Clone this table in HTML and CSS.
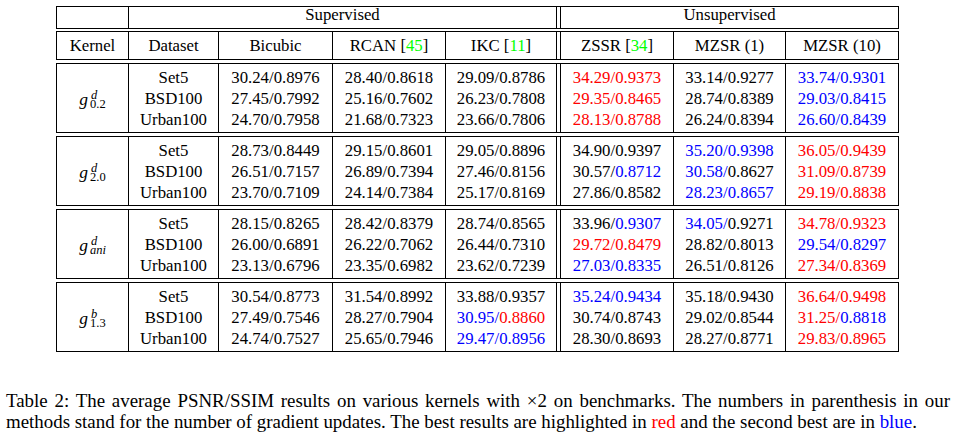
FILE: index.html
```html
<!DOCTYPE html>
<html>
<head>
<meta charset="utf-8">
<link rel="stylesheet" href="styles.css">
</head>
<body>
<div class="page">
  <div class="table">
    <div class="sec head1">
      <div class="cell"></div>
      <div class="cell span-sup">Supervised</div>
      <div class="cell sep"></div>
      <div class="cell span-unsup">Unsupervised</div>
    </div>
    <div class="sec head2">
      <div class="cell">Kernel</div>
      <div class="cell">Dataset</div>
      <div class="cell">Bicubic</div>
      <div class="cell">RCAN [<span class="cite">45</span>]</div>
      <div class="cell">IKC [<span class="cite">11</span>]</div>
      <div class="cell sep"></div>
      <div class="cell">ZSSR [<span class="cite">34</span>]</div>
      <div class="cell">MZSR (1)</div>
      <div class="cell">MZSR (10)</div>
    </div>

    <div class="sec group">
      <div class="cell kernel"><span class="math"><i class="g">g</i><span class="scripts"><i class="sup">d</i><span class="sub">0.2</span></span></span></div>
      <div class="cell col"><div>Set5</div><div>BSD100</div><div>Urban100</div></div>
      <div class="cell col"><div>30.24/0.8976</div><div>27.45/0.7992</div><div>24.70/0.7958</div></div>
      <div class="cell col"><div>28.40/0.8618</div><div>25.16/0.7602</div><div>21.68/0.7323</div></div>
      <div class="cell col"><div>29.09/0.8786</div><div>26.23/0.7808</div><div>23.66/0.7806</div></div>
      <div class="cell sep"></div>
      <div class="cell col"><div class="r">34.29/0.9373</div><div class="r">29.35/0.8465</div><div class="r">28.13/0.8788</div></div>
      <div class="cell col"><div>33.14/0.9277</div><div>28.74/0.8389</div><div>26.24/0.8394</div></div>
      <div class="cell col"><div class="b">33.74/0.9301</div><div class="b">29.03/0.8415</div><div class="b">26.60/0.8439</div></div>
    </div>

    <div class="sec group">
      <div class="cell kernel"><span class="math"><i class="g">g</i><span class="scripts"><i class="sup">d</i><span class="sub">2.0</span></span></span></div>
      <div class="cell col"><div>Set5</div><div>BSD100</div><div>Urban100</div></div>
      <div class="cell col"><div>28.73/0.8449</div><div>26.51/0.7157</div><div>23.70/0.7109</div></div>
      <div class="cell col"><div>29.15/0.8601</div><div>26.89/0.7394</div><div>24.14/0.7384</div></div>
      <div class="cell col"><div>29.05/0.8896</div><div>27.46/0.8156</div><div>25.17/0.8169</div></div>
      <div class="cell sep"></div>
      <div class="cell col"><div>34.90/0.9397</div><div>30.57/<span class="b">0.8712</span></div><div>27.86/0.8582</div></div>
      <div class="cell col"><div class="b">35.20/0.9398</div><div><span class="b">30.58/</span>0.8627</div><div class="b">28.23/0.8657</div></div>
      <div class="cell col"><div class="r">36.05/0.9439</div><div class="r">31.09/0.8739</div><div class="r">29.19/0.8838</div></div>
    </div>

    <div class="sec group">
      <div class="cell kernel"><span class="math"><i class="g">g</i><span class="scripts"><i class="sup">d</i><i class="sub">ani</i></span></span></div>
      <div class="cell col"><div>Set5</div><div>BSD100</div><div>Urban100</div></div>
      <div class="cell col"><div>28.15/0.8265</div><div>26.00/0.6891</div><div>23.13/0.6796</div></div>
      <div class="cell col"><div>28.42/0.8379</div><div>26.22/0.7062</div><div>23.35/0.6982</div></div>
      <div class="cell col"><div>28.74/0.8565</div><div>26.44/0.7310</div><div>23.62/0.7239</div></div>
      <div class="cell sep"></div>
      <div class="cell col"><div>33.96/<span class="b">0.9307</span></div><div class="r">29.72/0.8479</div><div class="b">27.03/0.8335</div></div>
      <div class="cell col"><div><span class="b">34.05/</span>0.9271</div><div>28.82/0.8013</div><div>26.51/0.8126</div></div>
      <div class="cell col"><div class="r">34.78/0.9323</div><div class="b">29.54/0.8297</div><div class="r">27.34/0.8369</div></div>
    </div>

    <div class="sec group">
      <div class="cell kernel"><span class="math"><i class="g">g</i><span class="scripts"><i class="sup">b</i><span class="sub">1.3</span></span></span></div>
      <div class="cell col"><div>Set5</div><div>BSD100</div><div>Urban100</div></div>
      <div class="cell col"><div>30.54/0.8773</div><div>27.49/0.7546</div><div>24.74/0.7527</div></div>
      <div class="cell col"><div>31.54/0.8992</div><div>28.27/0.7904</div><div>25.65/0.7946</div></div>
      <div class="cell col"><div>33.88/0.9357</div><div><span class="b">30.95/</span><span class="r">0.8860</span></div><div class="b">29.47/0.8956</div></div>
      <div class="cell sep"></div>
      <div class="cell col"><div class="b">35.24/0.9434</div><div>30.74/0.8743</div><div>28.30/0.8693</div></div>
      <div class="cell col"><div>35.18/0.9430</div><div>29.02/0.8544</div><div>28.27/0.8771</div></div>
      <div class="cell col"><div class="r">36.64/0.9498</div><div><span class="r">31.25/</span><span class="b">0.8818</span></div><div class="r">29.83/0.8965</div></div>
    </div>
  </div>

  <div class="caption">
    <div class="cap-line justify">Table 2: The average PSNR/SSIM results on various kernels with ×2 on benchmarks. The numbers in parenthesis in our</div>
    <div class="cap-line">methods stand for the number of gradient updates. The best results are highlighted in <span class="r">red</span> and the second best are in <span class="b">blue</span>.</div>
  </div>
</div>
</body>
</html>
```

FILE: styles.css
```css
html, body {
  margin: 0;
  padding: 0;
  background: #ffffff;
}

.page {
  font-family: "Liberation Serif", "Times New Roman", serif;
  color: #000000;
}

.table {
  padding: 6px 0 0 56px;
  font-size: 16.75px;
}

.sec {
  display: grid;
  grid-template-columns: 72px 90px 114px 113px 111px 4px 113px 112px 113px;
  width: 843px;
  box-sizing: border-box;
  border-left: 1px solid #000;
  border-top: 1px solid #000;
  border-bottom: 1px solid #000;
}

.cell {
  box-sizing: border-box;
  border-right: 1px solid #000;
  text-align: center;
  white-space: nowrap;
}

.head1 {
  height: 23px;
  line-height: 16px;
}

.span-sup {
  grid-column: 2 / 6;
}

.span-unsup {
  grid-column: 7 / 10;
}

.head2 {
  height: 29px;
  margin-top: 2px;
  line-height: 27px;
}

.group {
  height: 70px;
  margin-top: 3px;
}

.col {
  padding-top: 3px;
  line-height: 21px;
}

.kernel {
  padding-top: 24px;
  line-height: 21px;
}

.math {
  display: inline-block;
  vertical-align: -1px;
  line-height: 21px;
}

.g {
  font-size: 17.5px;
  font-style: italic;
}

.scripts {
  display: inline-flex;
  flex-direction: column;
  align-items: flex-start;
  vertical-align: 6px;
  margin-left: 2px;
}

.sup,
.sub {
  display: block;
  font-size: 12.5px;
  line-height: 8.5px;
}

.sup {
  font-style: italic;
  margin-left: 1px;
}

.cite {
  color: #00ff00;
}

.r {
  color: #ff0000;
}

.b {
  color: #0000ff;
}

.caption {
  margin: 38px 0 0 6px;
  width: 944px;
  font-size: 18.9px;
  line-height: 21px;
}

.cap-line {
  white-space: nowrap;
}

.cap-line.justify {
  white-space: normal;
  text-align: justify;
  text-align-last: justify;
}
```
